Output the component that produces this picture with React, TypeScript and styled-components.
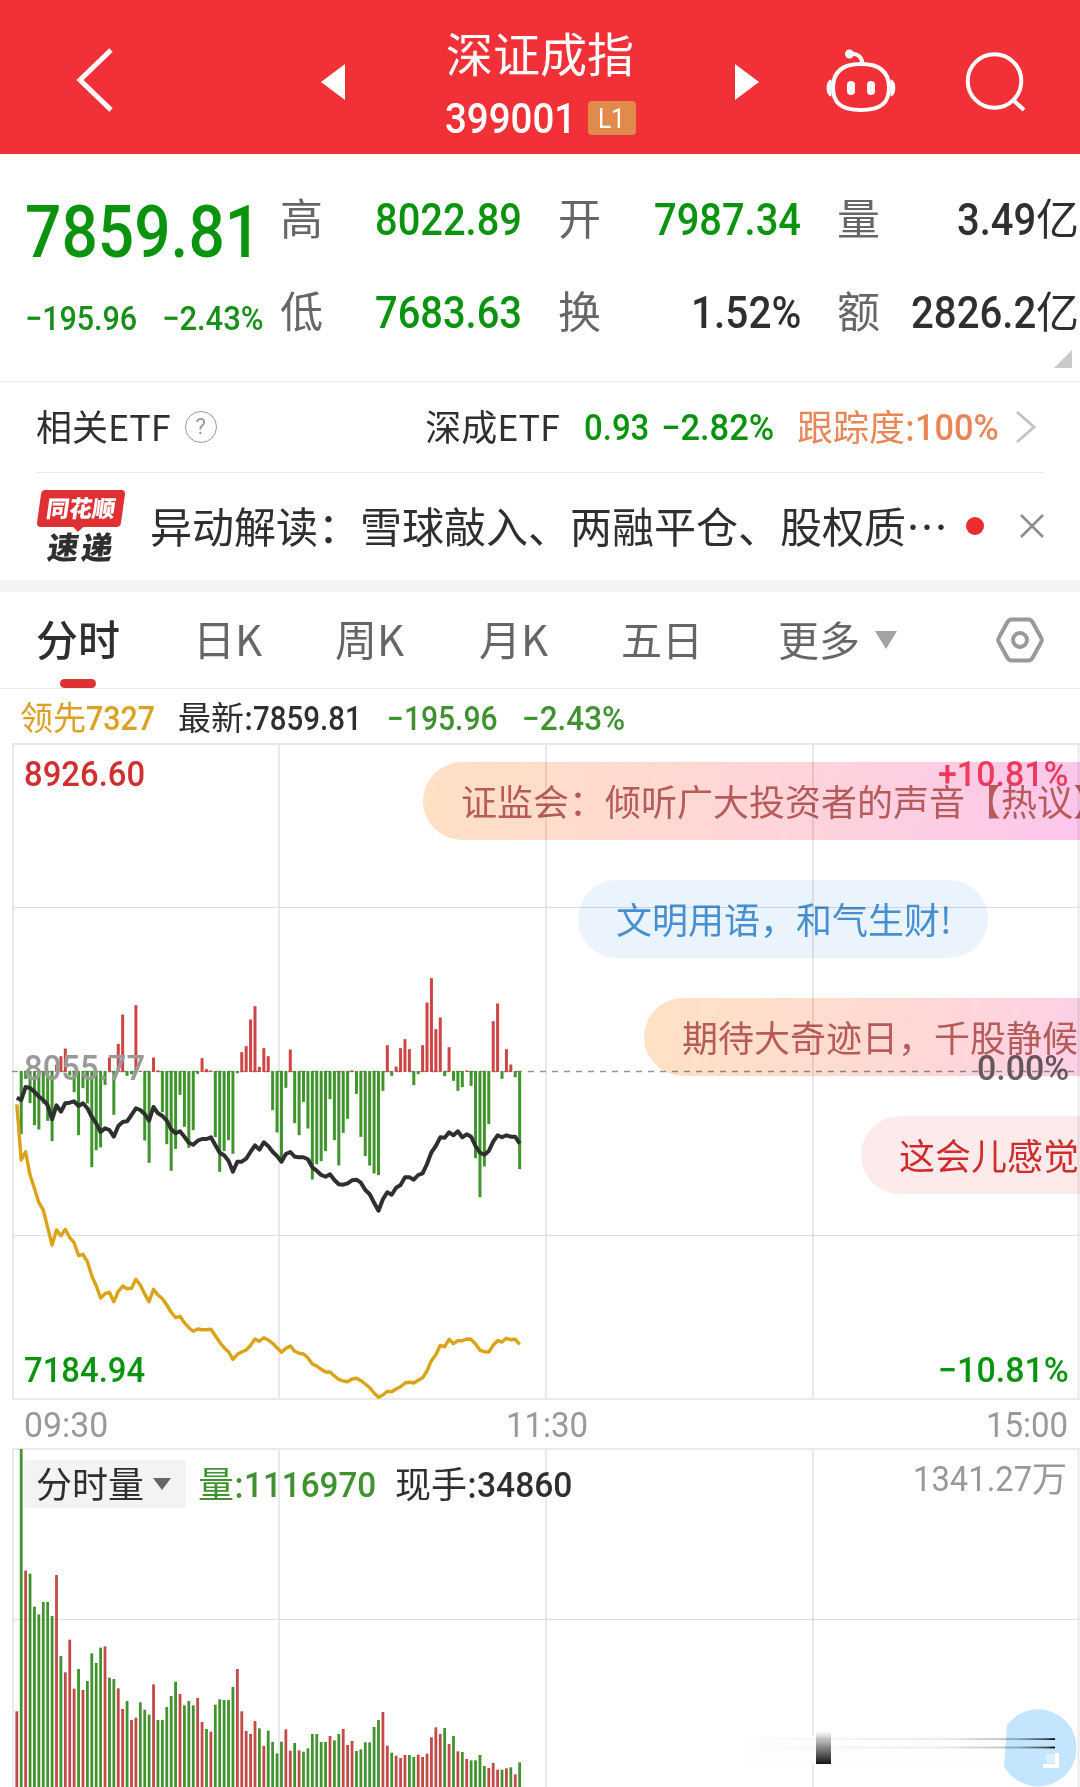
import React, { useLayoutEffect, useRef, useState } from 'react';
import styled, { createGlobalStyle } from 'styled-components';

const CJK = `"Noto Sans CJK SC", "Noto Sans", sans-serif`;
const NUM = `Roboto, "Noto Sans CJK SC", sans-serif`;

const GREEN = '#0a930e';
const LEAF = '#3f922f';
const INK = '#2f2f2f';

const GlobalStyle = createGlobalStyle`
  * { box-sizing: border-box; }
  body { margin: 0; background: #fff; overflow: hidden; font-family: ${CJK}; color: ${INK}; }
`;

/* ---------- text ---------- */

const FitBox = styled.span<{ $w: number; $size: number; $color?: string; $weight?: number }>`
  display: block;
  flex: none;
  width: ${(p) => p.$w}px;
  height: ${(p) => p.$size}px;
  line-height: ${(p) => p.$size + 2}px;
  font-family: ${NUM};
  font-size: ${(p) => p.$size}px;
  font-weight: ${(p) => p.$weight ?? 500};
  color: ${(p) => p.$color ?? 'inherit'};
  white-space: nowrap;
`;

const FitInner = styled.span`
  display: inline-block;
  transform-origin: 0 50%;
  vertical-align: top;
`;

type NumProps = { children: string; w: number; size: number; color?: string; weight?: number };

/* A figure condensed horizontally so that it fills its column exactly. */
function Num({ children, w, size, color, weight }: NumProps) {
  const ref = useRef<HTMLSpanElement>(null);
  const [scale, setScale] = useState(1);
  useLayoutEffect(() => {
    if (ref.current) setScale(w / ref.current.offsetWidth);
  }, [children, w, size]);
  return (
    <FitBox $w={w} $size={size} $color={color} $weight={weight}>
      <FitInner ref={ref} style={{ transform: `scaleX(${scale})` }}>
        {children}
      </FitInner>
    </FitBox>
  );
}

const Han = styled.span<{ $size: number; $color?: string; $weight?: number }>`
  display: block;
  flex: none;
  height: ${(p) => p.$size}px;
  line-height: ${(p) => p.$size * 0.91}px;
  font-size: ${(p) => p.$size}px;
  font-weight: ${(p) => p.$weight ?? 400};
  color: ${(p) => p.$color ?? 'inherit'};
  white-space: nowrap;
`;

/* ---------- page and header ---------- */

const Page = styled.main`
  width: 1080px;
  height: 1787px;
  overflow: hidden;
  background: #fff;
  display: flex;
  flex-direction: column;
`;

const Header = styled.header`
  flex: none;
  height: 154px;
  background: #f13038;
  color: #fff;
  display: grid;
  grid-template-columns: 315px 36px 378px 36px 192px 123px;
  align-items: center;
`;

const HeaderCell = styled.div<{ $left?: number; $top?: number }>`
  display: flex;
  padding-left: ${(p) => p.$left ?? 0}px;
  padding-top: ${(p) => p.$top ?? 0}px;
`;

const TitleBlock = styled.div`
  display: flex;
  flex-direction: column;
  align-items: center;
  gap: 19px;
  padding-top: 15px;
`;

const CodeLine = styled.div`
  display: flex;
  align-items: center;
  gap: 12px;
`;

const Badge = styled.span`
  display: flex;
  align-items: center;
  justify-content: center;
  width: 48px;
  height: 34px;
  border-radius: 4px;
  background: #e08a4b;
`;

/* ---------- quote ---------- */

const Quote = styled.section`
  flex: none;
  height: 228px;
  border-bottom: 1px solid #e6e6e6;
  display: grid;
  grid-template-columns: 280px 1fr;
  position: relative;
`;

const LastPrice = styled.div`
  display: flex;
  flex-direction: column;
  padding: 41px 0 0 25px;
  gap: 32px;
`;

const Deltas = styled.div`
  display: flex;
  gap: 25px;
`;

const Stats = styled.div`
  display: grid;
  grid-template-columns: 242px 243px 242px;
  grid-template-rows: 93px 93px;
  column-gap: 36px;
  padding-top: 18px;
`;

const Stat = styled.div`
  display: flex;
  align-items: center;
  justify-content: space-between;
`;

const StatValue = styled.div`
  display: flex;
  align-items: center;
`;

const Corner = styled.svg`
  position: absolute;
  right: 8px;
  bottom: 13px;
`;

/* ---------- related ETF and news ---------- */

const EtfRow = styled.section`
  flex: none;
  height: 91px;
  margin: 0 36px;
  border-bottom: 1px solid #ebebeb;
  display: flex;
  align-items: center;
`;

const Help = styled.span`
  width: 32px;
  height: 32px;
  margin-left: 14px;
  border: 1.5px solid #999;
  border-radius: 50%;
  color: #999;
  font: 400 22px/29px ${NUM};
  text-align: center;
`;

const EtfQuote = styled.div`
  display: flex;
  align-items: center;
  margin-left: auto;
`;

const Gap = styled.span<{ $w: number }>`
  flex: none;
  width: ${(p) => p.$w}px;
`;

const NewsRow = styled.section`
  flex: none;
  height: 107px;
  padding-left: 37px;
  display: flex;
  align-items: center;
`;

const Logo = styled.div`
  width: 88px;
  height: 74px;
  margin-right: 25px;
  display: flex;
  flex-direction: column;
  align-items: center;
`;

const LogoPlate = styled.div`
  position: relative;
  width: 84px;
  height: 37px;
  border-radius: 4px;
  background: #df3034;
  transform: skewX(-8deg);
  color: #fff;
  font: 900 23px/34px ${CJK};
  text-align: center;
  &::after {
    content: '';
    position: absolute;
    left: 36px;
    bottom: -5px;
    border: 6px solid transparent;
    border-bottom: 0;
    border-top-color: #df3034;
  }
`;

const LogoWord = styled.div`
  margin-top: 3px;
  transform: skewX(-8deg);
  font: 900 31px/32px ${CJK};
  letter-spacing: 3px;
  padding-left: 2px;
`;

const Dot = styled.i`
  width: 18px;
  height: 18px;
  margin-bottom: 2px;
  border-radius: 50%;
  background: #ea2d30;
`;

const Band = styled.div`
  flex: none;
  height: 12px;
  background: #f4f4f4;
`;

/* ---------- tabs ---------- */

const Tabs = styled.nav`
  flex: none;
  height: 97px;
  border-bottom: 1px solid #e6e6e6;
  display: grid;
  grid-template-columns: 157px 142px 144px 142px 157px 218px 1fr;
  padding-left: 36px;
`;

const Tab = styled.div<{ $active?: boolean }>`
  display: flex;
  align-items: center;
  position: relative;
  gap: 15px;
  color: ${(p) => (p.$active ? INK : '#666')};
  &::after {
    content: '';
    display: ${(p) => (p.$active ? 'block' : 'none')};
    position: absolute;
    left: 24px;
    bottom: 0;
    width: 36px;
    height: 9px;
    border-radius: 5px;
    background: #dc3233;
  }
`;

/* ---------- charts ---------- */

const Legend = styled.div`
  flex: none;
  height: 54px;
  padding: 3px 0 0 20px;
  display: flex;
  align-items: center;
`;

const Pane = styled.section<{ $h: number }>`
  flex: none;
  position: relative;
  height: ${(p) => p.$h}px;
  overflow: hidden;
`;

const Plot = styled.svg`
  display: block;
`;

const Mark = styled.div<{ $y: number; $side: 'left' | 'right' }>`
  position: absolute;
  top: ${(p) => p.$y}px;
  ${(p) => (p.$side === 'left' ? 'left: 24px;' : 'right: 11px;')}
  display: flex;
  align-items: center;
`;

const Bubble = styled.div<{ $x: number; $y: number; $w: number; $bg: string; $color: string }>`
  position: absolute;
  left: ${(p) => p.$x}px;
  top: ${(p) => p.$y}px;
  width: ${(p) => p.$w}px;
  height: 78px;
  padding-left: 38px;
  border-radius: 39px;
  background: ${(p) => p.$bg};
  color: ${(p) => p.$color};
  font-size: 36px;
  line-height: 76px;
  white-space: nowrap;
  overflow: hidden;
  mix-blend-mode: multiply;
`;

const TimeAxis = styled.div`
  flex: none;
  height: 48px;
  padding: 0 12px 0 24px;
  display: flex;
  align-items: center;
  justify-content: space-between;
`;

const VolumeLegend = styled.div`
  position: absolute;
  left: 24px;
  top: 12px;
  height: 48px;
  display: flex;
  align-items: center;
`;

const Picker = styled.div`
  display: flex;
  align-items: center;
  gap: 9px;
  width: 162px;
  height: 48px;
  padding-left: 12px;
  margin-right: 12px;
  border-radius: 4px;
  background: #f3f3f3;
`;

/* Net flow per minute, thirds of a pixel; positive bars rise in red, negative fall in green. */
const FLOW = [
  0, -188, -22, -95, -161, -174, -96, -148, -209, 20, 46, 69, -12, -62, -191, -50, -96, -287, -236, -228, -40, 42, -130,
  83, 171, -13, -8, 199, 2, -207, -274, 42, 3, -122, -218, -298, -232, -70, -166, -229, -176, -7, 40, 7, 3, -197, -301,
  -239, -206, -247, -5, 58, 76, 156, 196, 14, 70, 46, -116, -183, -261, -49, 66, -155, -191, -91, -171, -324, -278, -269,
  -239, -83, -206, -282, -184, -142, 3, -67, -196, -254, -282, -306, -311, -58, 79, -13, 15, 70, 97, 67, -41, -8, 79,
  207, 280, 127, 162, -14, 73, -28, -58, -47, 3, -43, -260, -377, -285, -158, 151, 204, -22, 67, 21, -17, -293,
];

const PRICE = [
  413, 420, 381, 384, 395, 410, 420, 436, 478, 436, 455, 430, 428, 424, 438, 430, 445, 470, 490, 516, 505, 510, 530, 498,
  486, 484, 465, 445, 450, 462, 482, 441, 460, 468, 482, 508, 520, 514, 530, 548, 554, 542, 537, 537, 532, 555, 578, 586,
  602, 635, 605, 605, 596, 575, 556, 569, 547, 558, 575, 588, 605, 582, 576, 590, 592, 592, 598, 622, 632, 645, 650, 643,
  660, 673, 674, 670, 661, 659, 668, 690, 703, 728, 752, 718, 697, 704, 683, 675, 652, 652, 659, 645, 640, 612, 577, 558,
  532, 533, 517, 526, 514, 532, 523, 530, 558, 578, 584, 573, 545, 526, 532, 526, 530, 530, 551,
];

const LEAD = [
  433, 600, 575, 645, 685, 728, 750, 803, 855, 810, 827, 808, 833, 848, 887, 883, 905, 948, 977, 1014, 1001, 997, 1025,
  994, 978, 986, 985, 958, 975, 1002, 1025, 988, 1005, 1016, 1035, 1057, 1073, 1069, 1088, 1103, 1114, 1107, 1109, 1109,
  1108, 1127, 1147, 1163, 1175, 1198, 1183, 1176, 1170, 1156, 1137, 1144, 1133, 1140, 1150, 1163, 1177, 1165, 1158, 1174,
  1180, 1182, 1193, 1212, 1218, 1228, 1236, 1236, 1248, 1258, 1263, 1265, 1257, 1255, 1262, 1272, 1283, 1299, 1312, 1305,
  1294, 1295, 1287, 1280, 1269, 1267, 1269, 1261, 1253, 1233, 1202, 1184, 1156, 1160, 1138, 1151, 1142, 1142, 1137, 1138,
  1152, 1171, 1175, 1176, 1156, 1142, 1146, 1135, 1139, 1138, 1153,
];

const VOLUME = [
  514, -273, 92, 101, 200, 223, 186, 186, 228, 105, 348, 397, 299, 446, 387, 450, 423, 340, 369, 323, 319, 413, 417, 445,
  507, 483, 540, 533, 487, 509, 524, 433, 540, 540, 501, 468, 425, 462, 496, 483, 496, 474, 546, 567, 575, 494, 478, 480,
  480, 441, 387, 514, 573, 582, 543, 565, 618, 572, 606, 640, 605, 568, 632, 609, 631, 635, 625, 582, 582, 606, 606, 588,
  601, 582, 567, 615, 603, 633, 628, 607, 607, 561, 540, 516, 617, 638, 647, 654, 645, 645, 651, 644, 651, 641, 592, 562,
  582, 564, 612, 588, 634, 636, 657, 661, 661, 645, 678, 684, 669, 689, 689, 685, 682, 703, 667,
];
const VOLUME_UP = new Set([
  0, 2, 9, 11, 12, 13, 15, 20, 23, 24, 26, 27, 31, 37, 41, 42, 44, 50, 51, 52, 53, 54, 56, 61, 62, 64, 71, 74, 75, 76, 83,
  84, 86, 87, 88, 91, 92, 93, 94, 95, 96, 98, 100, 102, 107, 108, 109, 111, 113,
]);

const barX = (i: number) => 16.8 + i * 4.411;
const COLUMNS = [13, 279, 546, 813, 1078.5];

const toPoints = (rows: number[]) => rows.map((v, i) => `${barX(i).toFixed(1)},${(217 + v / 3).toFixed(1)}`).join(' ');

function PricePlot() {
  return (
    <Plot width="1080" height="657" viewBox="0 0 1080 657">
      <g stroke="#e9e9e9">
        {COLUMNS.map((x) => (
          <line key={x} x1={x} x2={x} y1="0" y2="657" strokeWidth="2" />
        ))}
        <line x1="12" x2="1080" y1="1" y2="1" strokeWidth="2" />
        <line x1="12" x2="1080" y1="164.5" y2="164.5" stroke="#dedede" />
        <line x1="12" x2="1080" y1="492.5" y2="492.5" stroke="#dedede" />
        <line x1="12" x2="1080" y1="656" y2="656" strokeWidth="2" />
      </g>
      <line x1="12" x2="1078" y1="328.5" y2="328.5" stroke="#969696" strokeWidth="1.6" strokeDasharray="6 6" />
      {FLOW.map((v, i) =>
        v === 0 ? null : (
          <rect
            key={i}
            x={barX(i) - 1.5}
            width="3"
            y={v > 0 ? 328.5 - v / 3 : 328}
            height={Math.abs(v) / 3 + 0.5}
            fill={v > 0 ? '#cf4444' : '#3f952c'}
          />
        ),
      )}
      <polyline points={toPoints(LEAD)} fill="none" stroke="#dba31a" strokeWidth="3.4" strokeLinejoin="round" />
      <polyline points={toPoints(PRICE)} fill="none" stroke="#2f2f2f" strokeWidth="4" strokeLinejoin="round" />
    </Plot>
  );
}

function VolumePlot() {
  return (
    <Plot width="1080" height="339" viewBox="0 0 1080 339">
      <defs>
        <linearGradient id="block" x1="0" y1="0" x2="0" y2="1">
          <stop offset="0" stopColor="#000" stopOpacity="0.03" />
          <stop offset="1" stopColor="#000" stopOpacity="0.92" />
        </linearGradient>
        <linearGradient id="trail" x1="0" y1="0" x2="1" y2="0">
          <stop offset="0" stopColor="#000" stopOpacity="0" />
          <stop offset="0.65" stopColor="#000" stopOpacity="0.08" />
          <stop offset="0.88" stopColor="#000" stopOpacity="0.28" />
          <stop offset="0.97" stopColor="#000" stopOpacity="0.65" />
          <stop offset="1" stopColor="#000" stopOpacity="1" />
        </linearGradient>
      </defs>
      <g stroke="#e9e9e9">
        {COLUMNS.map((x) => (
          <line key={x} x1={x} x2={x} y1="0" y2="339" strokeWidth="2" />
        ))}
        <line x1="12" x2="1080" y1="1" y2="1" strokeWidth="2" />
        <line x1="12" x2="1080" y1="171.5" y2="171.5" stroke="#dedede" />
      </g>
      {VOLUME.map((v, i) => (
        <rect
          key={i}
          x={barX(i) - 1.4}
          width="2.8"
          y={92 + v / 3}
          height="400"
          fill={VOLUME_UP.has(i) ? '#c24a48' : '#42932f'}
        />
      ))}
      <rect x="745" y="288" width="260" height="28" fill="#fdfdfd" />
      <path d="M1007 277 A38.5 38.5 0 1 1 1004 318 Z" fill="#c3e5fd" />
      <rect x="816" y="284" width="15" height="32" fill="url(#block)" />
      <rect x="745" y="290.2" width="310" height="1.8" fill="url(#trail)" />
      <rect x="745" y="298.6" width="310" height="1.8" fill="url(#trail)" />
      <rect x="1046" y="306" width="10" height="9" fill="#eef6fb" opacity="0.6" />
      <path d="M1057 305v13h-14" fill="none" stroke="#fff" strokeWidth="4" />
    </Plot>
  );
}

const Down = ({ w, h, color }: { w: number; h: number; color: string }) => (
  <svg width={w} height={h} viewBox="0 0 10 10" preserveAspectRatio="none">
    <path d="M0 0H10L5 10Z" fill={color} />
  </svg>
);

export default function App() {
  return (
    <Page lang="zh-CN">
      <GlobalStyle />
      <Header>
        <HeaderCell $left={74} $top={5}>
          <svg width="42" height="70" viewBox="0 0 42 70" fill="none" stroke="#fff" strokeWidth="5">
            <path d="M37 5L6 35L37 65" />
          </svg>
        </HeaderCell>
        <HeaderCell $left={6} $top={10}>
          <svg width="24" height="36" viewBox="0 0 24 36">
            <path d="M24 0V36L0 18Z" fill="#fff" />
          </svg>
        </HeaderCell>
        <TitleBlock>
          <Han $size={47}>深证成指</Han>
          <CodeLine>
            <Num w={131} size={42}>
              399001
            </Num>
            <Badge>
              <Num w={27} size={28} weight={400}>
                L1
              </Num>
            </Badge>
          </CodeLine>
        </TitleBlock>
        <HeaderCell $left={6} $top={10}>
          <svg width="24" height="36" viewBox="0 0 24 36">
            <path d="M0 0V36L24 18Z" fill="#fff" />
          </svg>
        </HeaderCell>
        <HeaderCell $left={60} $top={7}>
          <svg width="72" height="66" viewBox="0 0 72 66" fill="none" stroke="#fff" strokeWidth="4">
            <path d="M36 16C55 16 64 24 64 39.500C64 55 56 62 36 62C16 62 8 55 8 39.500C8 24 17 16 36 16Z" />
            <path d="M25 6C33 5 37 9 37.500 16" />
            <circle cx="24.500" cy="6" r="4.500" fill="#fff" stroke="none" />
            <path d="M6.500 31.500C0 32 0 48 6.500 48.500ZM65.500 31.500C72 32 72 48 65.500 48.500Z" fill="#fff" stroke="none" />
            <rect x="22" y="33" width="8" height="14" rx="4" fill="#fff" stroke="none" />
            <rect x="42" y="33" width="8" height="14" rx="4" fill="#fff" stroke="none" />
          </svg>
        </HeaderCell>
        <HeaderCell $left={7} $top={9}>
          <svg width="64" height="64" viewBox="0 0 64 64" fill="none" stroke="#fff" strokeWidth="4">
            <circle cx="30.500" cy="31" r="26.800" />
            <path d="M49 50L60 60" />
          </svg>
        </HeaderCell>
      </Header>

      <Quote>
        <LastPrice>
          <Num w={236} size={73} color={GREEN}>
            7859.81
          </Num>
          <Deltas>
            <Num w={112} size={34} color="#188f18">
              −195.96
            </Num>
            <Num w={102} size={34} color="#188f18">
              −2.43%
            </Num>
          </Deltas>
        </LastPrice>
        <Stats>
          <Stat>
            <Han $size={43} $color="#666">高</Han>
            <Num w={147} size={45} color={GREEN}>8022.89</Num>
          </Stat>
          <Stat>
            <Han $size={43} $color="#666">开</Han>
            <Num w={147} size={45} color={GREEN}>7987.34</Num>
          </Stat>
          <Stat>
            <Han $size={43} $color="#666">量</Han>
            <StatValue>
              <Num w={79} size={45}>3.49</Num>
              <Han $size={43}>亿</Han>
            </StatValue>
          </Stat>
          <Stat>
            <Han $size={43} $color="#666">低</Han>
            <Num w={147} size={45} color={GREEN}>7683.63</Num>
          </Stat>
          <Stat>
            <Han $size={43} $color="#666">换</Han>
            <Num w={110} size={45}>1.52%</Num>
          </Stat>
          <Stat>
            <Han $size={43} $color="#666">额</Han>
            <StatValue>
              <Num w={125} size={45}>2826.2</Num>
              <Han $size={43}>亿</Han>
            </StatValue>
          </Stat>
        </Stats>
        <Corner width="18" height="18" viewBox="0 0 18 18">
          <path d="M18 0V18H0Z" fill="#c9c9c9" />
        </Corner>
      </Quote>

      <EtfRow>
        <Han $size={36}>相关ETF</Han>
        <Help>?</Help>
        <EtfQuote>
          <Han $size={36}>深成ETF</Han>
          <Gap $w={24} />
          <Num w={65} size={36} color={GREEN}>0.93</Num>
          <Gap $w={12} />
          <Num w={113} size={36} color={GREEN}>−2.82%</Num>
          <Gap $w={23} />
          <Han $size={36} $color="#ea8557">跟踪度:</Han>
          <Num w={84} size={36} color="#ea8557">100%</Num>
          <Gap $w={16} />
          <svg width="22" height="34" viewBox="0 0 22 34" fill="none" stroke="#c4c4c4" strokeWidth="3">
            <path d="M2 2L19 17L2 32" />
          </svg>
          <Gap $w={7} />
        </EtfQuote>
      </EtfRow>

      <NewsRow>
        <Logo>
          <LogoPlate>同花顺</LogoPlate>
          <LogoWord>速递</LogoWord>
        </Logo>
        <Han $size={42}>异动解读：雪球敲入、两融平仓、股权质…</Han>
        <Gap $w={18} />
        <Dot />
        <Gap $w={35} />
        <svg width="26" height="28" viewBox="0 0 26 28" fill="none" stroke="#8c8c8c" strokeWidth="2.500">
          <path d="M2 2L24 24M24 2L2 24" />
        </svg>
      </NewsRow>
      <Band />

      <Tabs>
        <Tab $active>
          <Han $size={42} $weight={500}>分时</Han>
        </Tab>
        <Tab>
          <Han $size={42}>日K</Han>
        </Tab>
        <Tab>
          <Han $size={42}>周K</Han>
        </Tab>
        <Tab>
          <Han $size={42}>月K</Han>
        </Tab>
        <Tab>
          <Han $size={41}>五日</Han>
        </Tab>
        <Tab>
          <Han $size={41}>更多</Han>
          <Down w={22} h={18} color="#a3a3a3" />
        </Tab>
        <Tab>
          <svg width="50" height="50" viewBox="0 0 50 50" fill="none" stroke="#999" strokeWidth="4" strokeLinejoin="round">
            <path d="M15.500 4.500H32.500Q35 4.500 36.500 7L45 22.500Q46.500 25 45 27.500L36.500 43Q35 45.500 32.500 45.500H15.500Q13 45.500 11.500 43L3 27.500Q1.500 25 3 22.500L11.500 7Q13 4.500 15.500 4.500Z" />
            <circle cx="24" cy="25" r="7" />
          </svg>
        </Tab>
      </Tabs>

      <Legend>
        <Han $size={33} $color="#dba125">领先</Han>
        <Num w={69} size={33} color="#dba125">7327</Num>
        <Gap $w={23} />
        <Han $size={33}>最新:</Han>
        <Num w={109} size={33}>7859.81</Num>
        <Gap $w={25} />
        <Num w={111} size={33} color={LEAF}>−195.96</Num>
        <Gap $w={24} />
        <Num w={103} size={33} color={LEAF}>−2.43%</Num>
      </Legend>

      <Pane $h={657}>
        <PricePlot />
        <Mark $y={13} $side="left">
          <Num w={121} size={35} color="#d12f2f">8926.60</Num>
        </Mark>
        <Mark $y={307} $side="left">
          <Num w={121} size={35} color="#999">8055.77</Num>
        </Mark>
        <Mark $y={609} $side="left">
          <Num w={121} size={35} color={GREEN}>7184.94</Num>
        </Mark>
        <Mark $y={13} $side="right">
          <Num w={131} size={35} color="#ee4a66">+10.81%</Num>
        </Mark>
        <Mark $y={307} $side="right">
          <Num w={92} size={35} color="#666">0.00%</Num>
        </Mark>
        <Mark $y={609} $side="right">
          <Num w={131} size={35} color={GREEN}>−10.81%</Num>
        </Mark>
        <Bubble
          $x={423}
          $y={19}
          $w={760}
          $bg="linear-gradient(100deg, #ffe1c4 0%, #ffd5d8 45%, #fdcbe6 72%, #fbc2f2 100%)"
          $color="#b65a5a"
        >
          证监会：倾听广大投资者的声音【热议】
        </Bubble>
        <Bubble $x={578} $y={137} $w={410} $bg="#ebf4fc" $color="#4690d2">
          文明用语，和气生财!
        </Bubble>
        <Bubble
          $x={644}
          $y={255}
          $w={620}
          $bg="linear-gradient(100deg, #ffe2c4 0%, #ffd8d6 45%, #fbcdec 80%, #fbc2f2 100%)"
          $color="#b65a5a"
        >
          期待大奇迹日，千股静候
        </Bubble>
        <Bubble $x={861} $y={373} $w={400} $bg="#fdebeb" $color="#d02c2e">
          这会儿感觉
        </Bubble>
      </Pane>

      <TimeAxis>
        <Num w={84} size={35} color="#999" weight={400}>09:30</Num>
        <Num w={82} size={35} color="#999" weight={400}>11:30</Num>
        <Num w={82} size={35} color="#999" weight={400}>15:00</Num>
      </TimeAxis>

      <Pane $h={339}>
        <VolumePlot />
        <VolumeLegend>
          <Picker>
            <Han $size={36}>分时量</Han>
            <Down w={18} h={12} color="#666" />
          </Picker>
          <Han $size={36} $color={LEAF}>量:</Han>
          <Num w={132} size={35} color={LEAF}>1116970</Num>
          <Gap $w={19} />
          <Han $size={36}>现手:</Han>
          <Num w={95} size={35}>34860</Num>
        </VolumeLegend>
        <Mark $y={13} $side="right">
          <Num w={119} size={35} color="#999" weight={400}>1341.27</Num>
          <Han $size={35} $color="#999">万</Han>
          <Gap $w={2} />
        </Mark>
      </Pane>
    </Page>
  );
}
